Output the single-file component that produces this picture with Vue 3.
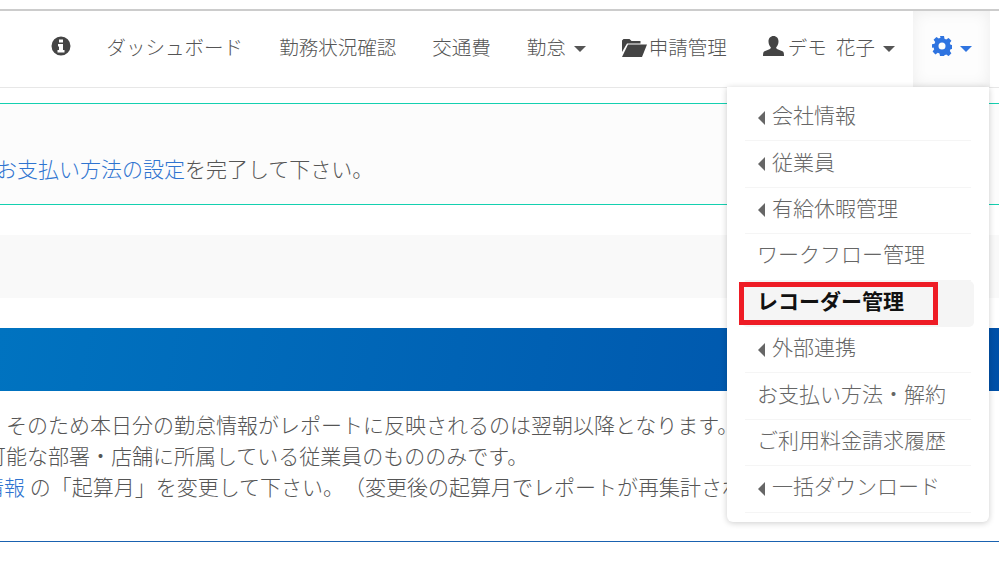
<template>
  <div class="page">
    <header class="navbar">
      <nav class="nav">
        <a class="nav-item">
          <svg width="20" height="20" viewBox="0 0 20 20"><path fill-rule="evenodd" fill="#444" d="M10 .5a9.500 9.500 0 1 0 0 19a9.500 9.500 0 0 0 0-19zM8 3.500h4v3H8zM7 8h5v6h1.500v2.500h-7V14H8v-3.500H7z"/></svg>
        </a>
        <a class="nav-item">ダッシュボード</a>
        <a class="nav-item">勤務状況確認</a>
        <a class="nav-item">交通費</a>
        <a class="nav-item">勤怠<i class="caret"></i></a>
        <a class="nav-item">
          <svg class="folder" width="25" height="19" viewBox="0 0 25 19"><path fill="#444" d="M0 14V2.500L1.500 1h6L9.500 3h9v2.500H5z"/><path fill="#444" d="M6 6.500h19L20 19H0z"/></svg>
          申請管理
        </a>
        <a class="nav-item">
          <svg class="user" width="21" height="20" viewBox="0 0 21 20"><path fill="#444" d="M10.500 0c3 0 5 2.300 5 5.500c0 2.500-1 4.500-2.300 5.700c0 1 .3 1.500 1.300 2l5 2c1 .5 1.500 1.500 1.500 4.800H0c0-3.300 .5-4.300 1.500-4.800l5-2c1-.5 1.300-1 1.300-2C6.500 10 5.500 8 5.500 5.500C5.500 2.300 7.500 0 10.500 0z"/></svg>
          <span class="user-name">デモ 花子</span><i class="caret"></i>
        </a>
        <a class="nav-item active">
          <svg width="20" height="20" viewBox="0 0 20 20"><path fill-rule="evenodd" fill="#2f74e0" d="M8 0h4l.5 2.800l1.700.7l2.400-1.600l2.800 2.800l-1.600 2.400l.7 1.700l2.500.5v3.400l-2.500.5l-.7 1.700l1.600 2.400l-2.800 2.800l-2.400-1.600l-1.700.7L12 20H8l-.5-2.500l-1.700-.7l-2.400 1.600l-2.800-2.800l1.600-2.400l-.7-1.700L0 11.700V8.300l2.500-.5l.7-1.700l-1.600-2.400l2.800-2.800l2.400 1.600l1.700-.7zM10 6.500a3.500 3.500 0 1 0 0 7a3.500 3.500 0 0 0 0-7z"/></svg>
          <i class="caret blue"></i>
        </a>
      </nav>
    </header>

    <section class="notice">
      <p><a class="link">お支払い方法の設定</a>を完了して下さい。</p>
    </section>

    <div class="grey-panel"></div>
    <div class="blue-band"></div>

    <section class="report-text">
      <p class="l1">そのため本日分の勤怠情報がレポートに反映されるのは翌朝以降となります。</p>
      <p class="l2">可能な部署・店舗に所属している従業員のもののみです。</p>
      <p class="l3"><a class="link">情報</a> の「起算月」を変更して下さい。（変更後の起算月でレポートが再集計されます）</p>
    </section>

    <ul class="menu">
      <li v-for="item in menuItems" :key="item.label" :class="{ selected: item.selected }">
        <i v-if="item.sub" class="caret-left"></i>{{ item.label }}
        <div v-if="item.selected" class="red-box"></div>
      </li>
    </ul>
  </div>
</template>

<script setup>
const menuItems = [
  { label: '会社情報', sub: true },
  { label: '従業員', sub: true },
  { label: '有給休暇管理', sub: true },
  { label: 'ワークフロー管理' },
  { label: 'レコーダー管理', selected: true },
  { label: '外部連携', sub: true },
  { label: 'お支払い方法・解約' },
  { label: 'ご利用料金請求履歴' },
  { label: '一括ダウンロード', sub: true }
]
</script>

<style>
html, body { margin: 0; background: #fff; overflow: hidden; }
</style>

<style scoped>
.page {
  position: relative;
  width: 999px;
  height: 568px;
  overflow: hidden;
  padding-top: 9px;
  box-sizing: border-box;
  color: #555;
  font-family: "Noto Sans CJK JP", "Liberation Sans", sans-serif;
  font-weight: 300;
  text-spacing-trim: space-all;
}
p { margin: 0; }
.navbar {
  border-top: 2px solid #ccc;
  border-bottom: 1px solid #e7e7e7;
  height: 76px;
  display: flex;
  justify-content: flex-end;
  padding-right: 9px;
}
.nav { display: flex; align-items: stretch; }
.nav-item {
  display: flex;
  align-items: center;
  padding: 0 18px 6px;
  font-size: 19.500px;
  color: #555;
}
.folder { margin: 2px 2px 0 0; }
.user { margin-right: 4px; }
.user-name { word-spacing: 5px; }
.active {
  background: #fdfdfd;
  box-shadow: inset 0 0 15px rgba(0, 0, 0, .07);
  padding: 0 18px 6px 19px;
}
.caret {
  margin: 6px 0 0 8px;
  border-top: 6px solid #555;
  border-left: 6px solid transparent;
  border-right: 6px solid transparent;
}
.caret.blue { border-top-color: #2f74e0; }
.notice {
  margin-top: 15px;
  height: 102px;
  border-top: 1px solid #14d0b0;
  border-bottom: 1px solid #14d0b0;
  background: #fcfcfc;
  box-sizing: border-box;
  padding: 49px 0 0;
  font-size: 21px;
  line-height: 30px;
}
.notice p { margin-left: -4px; }
.link { color: #2f74d0; }
.grey-panel { margin-top: 30px; height: 63px; background: #f9f9f9; }
.blue-band {
  margin-top: 30px;
  height: 63px;
  background: linear-gradient(100deg, #0073c0, #0050a8);
}
.report-text {
  height: 151px;
  padding-top: 18px;
  box-sizing: border-box;
  border-bottom: 1px solid #1a62b0;
  font-size: 21px;
  line-height: 31px;
  white-space: nowrap;
}
.l1 { padding-left: 6px; }
.l2 { margin-left: -15px; }
.l3 { margin-left: -17px; }
.menu {
  position: absolute;
  left: 727px;
  top: 87px;
  width: 262px;
  height: 435px;
  margin: 0;
  padding: 8px 18px 0;
  box-sizing: border-box;
  list-style: none;
  background: #fff;
  border-radius: 0 0 6px 6px;
  box-shadow: 0 1px 6px rgba(0, 0, 0, .2);
}
.menu li {
  display: flex;
  align-items: center;
  height: 46.400px;
  box-sizing: border-box;
  padding: 0 0 7px 12px;
  border-bottom: 1px solid #f5f5f5;
  font-size: 21px;
  color: #666;
}
.menu li.selected {
  position: relative;
  margin: 0 -3px;
  padding-left: 15px;
  font-weight: 700;
  color: #111;
  background: #f5f5f5;
  border-radius: 5px;
  border-bottom: 0;
}
.caret-left {
  margin: 7px 7px 0 1px;
  border-right: 7px solid #666;
  border-top: 7px solid transparent;
  border-bottom: 7px solid transparent;
}
.red-box {
  position: absolute;
  left: -3px;
  top: 1px;
  width: 199px;
  height: 43px;
  box-sizing: border-box;
  border: 5px solid #ee1c25;
}
</style>
